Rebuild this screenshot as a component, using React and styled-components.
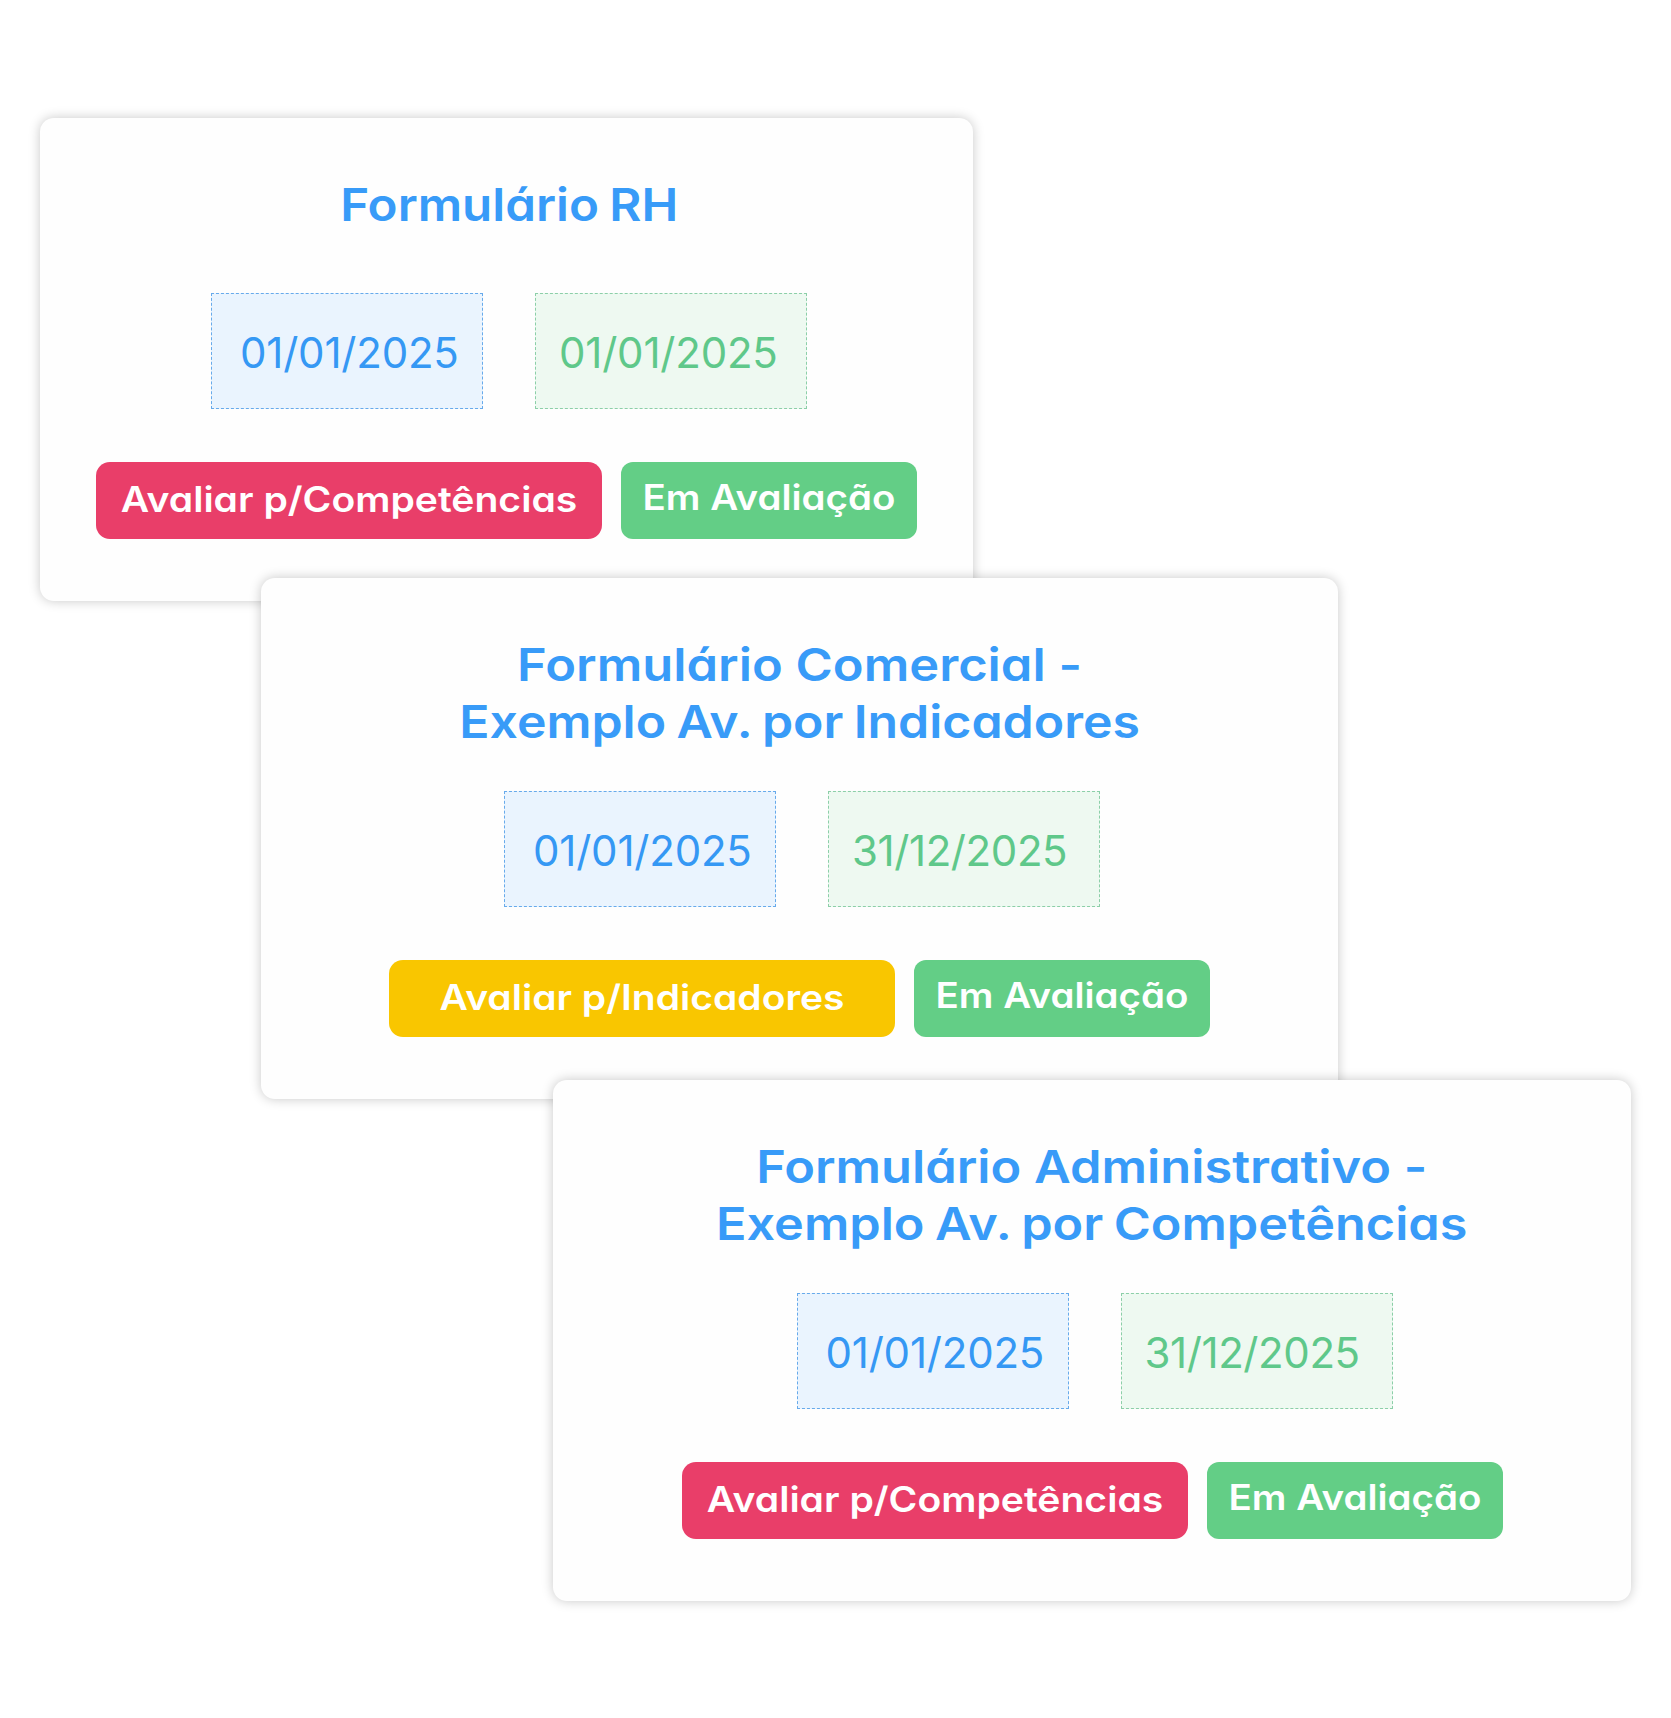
import React from 'react'
import styled, { createGlobalStyle } from 'styled-components'

const GlobalStyle = createGlobalStyle`
  body {
    margin: 0;
    background: #fff;
    font-family: Inter, 'Open Sans', sans-serif;
    font-feature-settings: 'cv11';
  }
`

const Board = styled.main`
  display: flex;
  flex-direction: column;
  align-items: flex-start;
  box-sizing: border-box;
  width: 1671px;
  height: 1718px;
  padding-top: 118px;
  overflow: hidden;
`

const Card = styled.section`
  position: relative;
  flex: none;
  display: flex;
  flex-direction: column;
  align-items: center;
  box-sizing: border-box;
  width: ${props => props.$width}px;
  height: ${props => props.$height}px;
  margin-left: ${props => props.$left}px;
  margin-top: ${props => props.$overlap || 0}px;
  padding-top: 58px;
  border-radius: 14px;
  background: #fefefe;
  box-shadow: 0 0 12px rgba(0, 0, 0, 0.22);
`

const Title = styled.h2`
  margin: 0;
  padding-left: ${props => props.$shift || 0}px;
  font-size: 45px;
  font-weight: 600;
  line-height: 57px;
  text-align: center;
  white-space: nowrap;
  color: #389bf8;
`

// widens the letters a little, the heading face is rounder than Inter
const TitleLine = styled.span`
  display: block;
  word-spacing: ${props => props.$gap}px;
  transform: scaleX(${props => props.$stretch});
`

const Dates = styled.div`
  display: flex;
  gap: 52px;
  margin-top: ${props => props.$top}px;
  padding-left: 5px;
`

const DateBox = styled.div`
  box-sizing: border-box;
  width: 272px;
  height: 116px;
  padding-left: ${props => (props.$end ? 23 : 28)}px;
  border: 1px dashed ${props => (props.$end ? '#8ccfa8' : '#67aaeb')};
  background: ${props => (props.$end ? '#eef9f1' : '#eaf4fe')};
  color: ${props => (props.$end ? '#5fc88a' : '#3598f4')};
  font-size: 42px;
  font-weight: 400;
  line-height: 118px;
  letter-spacing: ${props => props.$spacing}px;
  white-space: nowrap;
`

const Actions = styled.div`
  display: flex;
  gap: 19px;
  margin-top: 53px;
`

const Button = styled.button`
  box-sizing: border-box;
  width: 506px;
  height: 77px;
  padding: 0 0 3px;
  border: 0;
  border-radius: 14px;
  background: ${props => props.$color};
  color: #fff;
  font: inherit;
  font-feature-settings: inherit;
  font-size: 35px;
  font-weight: 600;
  line-height: 74px;
  white-space: nowrap;
  cursor: pointer;
`

const Status = styled.div`
  width: 296px;
  height: 77px;
  border-radius: 12px;
  background: #63ce86;
  color: #fff;
  font-size: 35px;
  font-weight: 600;
  line-height: 70px;
  text-align: center;
  white-space: nowrap;
`

const Label = styled.span`
  display: block;
  transform: scaleX(${props => props.$stretch});
`

const forms = [
  {
    id: 'rh',
    box: { $width: 933, $height: 483, $left: 40 },
    shift: 6,
    title: [['Formulário RH', 1.096, -2]],
    datesTop: 60,
    start: '01/01/2025',
    end: ['01/01/2025', -0.2],
    action: ['Avaliar p/Competências', '#e93e69', 1.117]
  },
  {
    id: 'comercial',
    box: { $width: 1077, $height: 521, $left: 261, $overlap: -23 },
    title: [
      ['Formulário Comercial -', 1.125, 0],
      ['Exemplo Av. por Indicadores', 1.11, -2]
    ],
    datesTop: 41,
    start: '01/01/2025',
    end: ['31/12/2025', -0.4],
    action: ['Avaliar p/Indicadores', '#f9c600', 1.115]
  },
  {
    id: 'administrativo',
    box: { $width: 1078, $height: 521, $left: 553, $overlap: -19 },
    title: [
      ['Formulário Administrativo -', 1.123, 0],
      ['Exemplo Av. por Competências', 1.119, -2]
    ],
    datesTop: 41,
    start: '01/01/2025',
    end: ['31/12/2025', -0.4],
    action: ['Avaliar p/Competências', '#e93e69', 1.117]
  }
]

const App = () => (
  <>
    <GlobalStyle />
    <Board>
      {forms.map(form => (
        <Card key={form.id} {...form.box}>
          <Title $shift={form.shift}>
            {form.title.map(([text, stretch, gap]) => (
              <TitleLine key={text} $stretch={stretch} $gap={gap}>
                {text}
              </TitleLine>
            ))}
          </Title>
          <Dates $top={form.datesTop}>
            <DateBox $spacing={-0.2}>{form.start}</DateBox>
            <DateBox $end $spacing={form.end[1]}>
              {form.end[0]}
            </DateBox>
          </Dates>
          <Actions>
            <Button $color={form.action[1]}>
              <Label $stretch={form.action[2]}>{form.action[0]}</Label>
            </Button>
            <Status>
              <Label $stretch={1.1}>Em Avaliação</Label>
            </Status>
          </Actions>
        </Card>
      ))}
    </Board>
  </>
)

export default App
